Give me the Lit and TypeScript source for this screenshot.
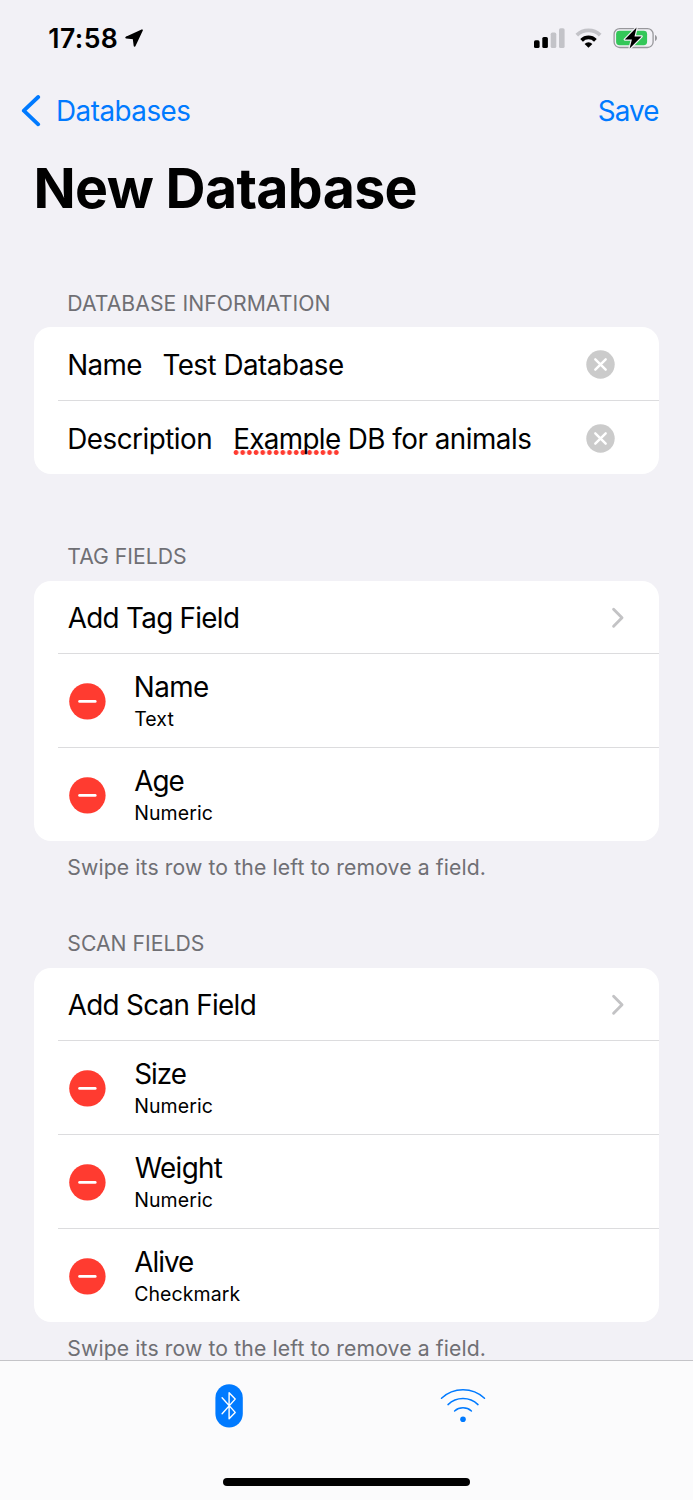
import { LitElement, html, css, svg } from "lit";

interface Field {
  name: string;
  type: string;
  spacing?: "tight" | "snug";
}

const tagFields: Field[] = [
  { name: "Name", type: "Text" },
  { name: "Age", type: "Numeric", spacing: "tight" },
];

const scanFields: Field[] = [
  { name: "Size", type: "Numeric", spacing: "tight" },
  { name: "Weight", type: "Numeric", spacing: "snug" },
  { name: "Alive", type: "Checkmark", spacing: "tight" },
];

const locationIcon = html`<svg class="location" width="20" height="20" viewBox="0 0 20 20">
  <path d="M18 2.2 L2.2 9.5 L9.6 10.4 L10.6 17.8 Z" fill="#000" stroke="#000" stroke-width="1.8" stroke-linejoin="round"/>
</svg>`;

const signalIcon = html`<svg width="31" height="20" viewBox="0 0 31 20">
  <rect x="0" y="12.3" width="5.6" height="7.7" rx="1.6" fill="#000"/>
  <rect x="8.3" y="9" width="5.6" height="11" rx="1.6" fill="#000"/>
  <rect x="16.7" y="4.6" width="5.6" height="15.4" rx="1.6" fill="#c3c3c8"/>
  <rect x="25" y="0.2" width="5.6" height="19.8" rx="1.6" fill="#c3c3c8"/>
</svg>`;

const wifiStatusIcon = html`<svg width="27" height="20" viewBox="0 0 27 20">
  <path d="M1.8 7.2 A16.8 16.8 0 0 1 25.2 7.2" fill="none" stroke="#c3c3c8" stroke-width="3.8"/>
  <path d="M6.6 12.3 A9.8 9.8 0 0 1 20.4 12.3" fill="none" stroke="#000" stroke-width="3.8"/>
  <path d="M13.5 19.8 L9.6 15.9 A5.6 5.6 0 0 1 17.4 15.9 Z" fill="#000"/>
</svg>`;

const batteryIcon = html`<svg width="45" height="24" viewBox="0 0 45 24">
  <rect x="1.1" y="2.6" width="39" height="18.9" rx="5.6" fill="none" stroke="#98989c" stroke-width="1.3"/>
  <path d="M42 9 C44.6 9.8 44.6 14.2 42 15 Z" fill="#98989c"/>
  <rect x="3.1" y="4.8" width="31" height="14.4" rx="3.4" fill="#34c759"/>
  <path d="M23.6 1.6 L11.8 13.5 L18.9 13.5 L16.6 22.6 L28.6 10.4 L21.5 10.4 Z" fill="#000" stroke="#f2f1f6" stroke-width="2.4" stroke-linejoin="round" paint-order="stroke"/>
</svg>`;

const backIcon = html`<svg class="back-icon" width="20" height="32" viewBox="0 0 20 32">
  <path d="M17.2 2 L2.8 15.7 L17.2 29.3" fill="none" stroke="#007aff" stroke-width="3.8" stroke-linecap="round" stroke-linejoin="round"/>
</svg>`;

const clearIcon = html`<svg width="29" height="29" viewBox="0 0 29 29">
  <circle cx="14.5" cy="14.5" r="14.2" fill="#cbcbcb"/>
  <path d="M9.3 9.3 L19.7 19.7 M19.7 9.3 L9.3 19.7" stroke="#fff" stroke-width="2.4" stroke-linecap="round"/>
</svg>`;

const disclosureIcon = html`<svg class="disclosure" width="14" height="22" viewBox="0 0 14 22">
  <path d="M2.6 2.2 L11 10.7 L2.6 19.2" fill="none" stroke="#c3c3c5" stroke-width="2.9" stroke-linecap="round" stroke-linejoin="round"/>
</svg>`;

const removeIcon = html`<svg class="remove" width="37" height="38" viewBox="0 0 37 38">
  <circle cx="18.4" cy="19.4" r="18.2" fill="#ff3b30"/>
  <path d="M10.6 19.4 H26.2" stroke="#fff" stroke-width="2.8" stroke-linecap="round"/>
</svg>`;

const bluetoothIcon = html`<svg class="bluetooth" width="28" height="44" viewBox="0 0 28 44">
  <rect x="0.4" y="0.2" width="27.4" height="43.2" rx="13.7" fill="#007aff"/>
  <path d="M7.1 13.8 L20.2 28.4 L14.1 34.8 V8.7 L20.2 15.1 L7.1 29.7" fill="none" stroke="#fff" stroke-width="1.4" stroke-linecap="round" stroke-linejoin="round"/>
</svg>`;

const arcs = [
  "M1.5 12.2 A31.5 31.5 0 0 1 44.5 12.2",
  "M8 18.6 A21.8 21.8 0 0 1 38 18.6",
  "M14.6 25 A12.8 12.8 0 0 1 31.4 25",
];

const wifiTabIcon = html`<svg class="wifi" width="46" height="38" viewBox="0 0 46 38">
  ${arcs.map((d) => svg`<path d=${d} fill="none" stroke="#007aff" stroke-width="1.5" stroke-linecap="round"/>`)}
  <circle cx="23" cy="33.2" r="2.8" fill="#007aff"/>
</svg>`;

class AppRoot extends LitElement {
  static styles = css`
    :host {
      display: flex;
      flex-direction: column;
      height: 1500px;
      overflow: hidden;
      background: #f2f1f6;
      color: #000;
      font-family: Inter, sans-serif;
    }
    svg { display: block; flex: none; }
    .screen { flex: 1; min-height: 0; overflow: hidden; }
    .status {
      box-sizing: border-box;
      height: 76px;
      padding: 23px 35px 0 48.3px;
      display: flex;
      align-items: flex-start;
    }
    .time { font-size: 26.6px; font-weight: 600; line-height: 30px; letter-spacing: 0.4px; }
    .location { margin: 5px auto 0 6px; }
    .indicators { display: flex; align-items: center; gap: 11px; padding-top: 3px; }
    .indicators svg:nth-child(1) { margin-right: -1px; }
    .nav {
      height: 70px;
      padding: 0 34.5px 0 21px;
      display: flex;
      align-items: center;
      color: #007aff;
      font-size: 27.8px;
      line-height: 34px;
      letter-spacing: -0.5px;
    }
    .back-icon { margin-right: 15px; }
    .save { margin-left: auto; letter-spacing: -0.9px; }
    .title {
      margin: 0;
      padding: 9px 0 69px 33.5px;
      font-size: 55.4px;
      font-weight: 700;
      line-height: 66px;
      letter-spacing: -0.65px;
    }
    .caption {
      padding-left: 67.3px;
      font-size: 21.2px;
      line-height: 26px;
      color: #6f6f74;
      white-space: nowrap;
    }
    .head { margin-bottom: 11px; }
    .head.wide { letter-spacing: 0.05px; }
    .foot { margin-top: 13px; letter-spacing: 0.115px; }
    .after-info { margin-top: 69px; margin-bottom: 12px; }
    .after-tags { margin-top: 50px; margin-bottom: 12px; }
    .card {
      margin: 0 34px;
      border-radius: 17px;
      background: #fff;
      overflow: hidden;
      font-size: 27.8px;
      line-height: 34px;
      letter-spacing: -0.5px;
    }
    .row {
      box-sizing: border-box;
      height: 73px;
      padding: 2px 44px 0 33.3px;
      display: flex;
      align-items: center;
    }
    .line { height: 1px; margin-left: 24px; background: #dcdcde; }
    .label { margin-right: 21px; }
    .short { margin-right: 20.5px; letter-spacing: -0.63px; }
    .value { flex: 1; }
    .misspelled {
      display: inline-block;
      letter-spacing: -0.65px;
      background: radial-gradient(circle at 3px 2.5px, #ff3b30 2px, rgba(255, 59, 48, 0) 2.8px) 0 calc(100% - 1px) / 6.69px 5px repeat-x;
    }
    .add { height: 72px; padding: 1px 34px 0 33.8px; letter-spacing: -0.7px; }
    .disclosure { margin-left: auto; }
    .field { height: 93px; padding: 0 44px 0 35px; }
    .remove { margin-right: 27.7px; }
    .name { line-height: 32px; }
    .tight { padding-left: 0.5px; letter-spacing: -0.95px; }
    .snug { padding-left: 1px; letter-spacing: -0.65px; }
    .type { margin-top: 4px; font-size: 19.5px; line-height: 24px; letter-spacing: 0.08px; padding-left: 0.5px; }
    .tabs {
      box-sizing: border-box;
      height: 140px;
      border-top: 1px solid #c4c4c8;
      background: #fbfbfc;
      display: flex;
      flex-direction: column;
      align-items: center;
    }
    .tab-row { width: 100%; height: 117px; display: flex; align-items: flex-start; }
    .bluetooth { margin: 22.5px 0 0 215px; }
    .wifi { margin: 25px 0 0 197.4px; }
    .home { width: 247.4px; height: 8px; border-radius: 4px; background: #000; }
  `;

  fieldRows(fields: Field[]) {
    return fields.map(
      (f) => html`
        <div class="line"></div>
        <div class="row field">
          ${removeIcon}
          <div>
            <div class="name ${f.spacing ?? ""}">${f.name}</div>
            <div class="type">${f.type}</div>
          </div>
        </div>
      `
    );
  }

  render() {
    return html`
      <div class="screen">
        <div class="status">
          <span class="time">17:58</span>${locationIcon}
          <div class="indicators">${signalIcon}${wifiStatusIcon}${batteryIcon}</div>
        </div>
        <div class="nav">${backIcon}<span>Databases</span><span class="save">Save</span></div>
        <h1 class="title">New Database</h1>

        <div class="caption head wide">DATABASE INFORMATION</div>
        <div class="card">
          <div class="row">
            <span class="label short">Name</span><span class="value">Test Database</span>${clearIcon}
          </div>
          <div class="line"></div>
          <div class="row">
            <span class="label">Description</span><span class="value"><span class="misspelled">Example</span> DB for animals</span>${clearIcon}
          </div>
        </div>

        <div class="caption head after-info">TAG FIELDS</div>
        <div class="card">
          <div class="row add"><span>Add Tag Field</span>${disclosureIcon}</div>
          ${this.fieldRows(tagFields)}
        </div>
        <div class="caption foot">Swipe its row to the left to remove a field.</div>

        <div class="caption head after-tags">SCAN FIELDS</div>
        <div class="card">
          <div class="row add"><span>Add Scan Field</span>${disclosureIcon}</div>
          ${this.fieldRows(scanFields)}
        </div>
        <div class="caption foot">Swipe its row to the left to remove a field.</div>
      </div>

      <div class="tabs">
        <div class="tab-row">${bluetoothIcon}${wifiTabIcon}</div>
        <div class="home"></div>
      </div>
    `;
  }
}

customElements.define("app-root", AppRoot);
